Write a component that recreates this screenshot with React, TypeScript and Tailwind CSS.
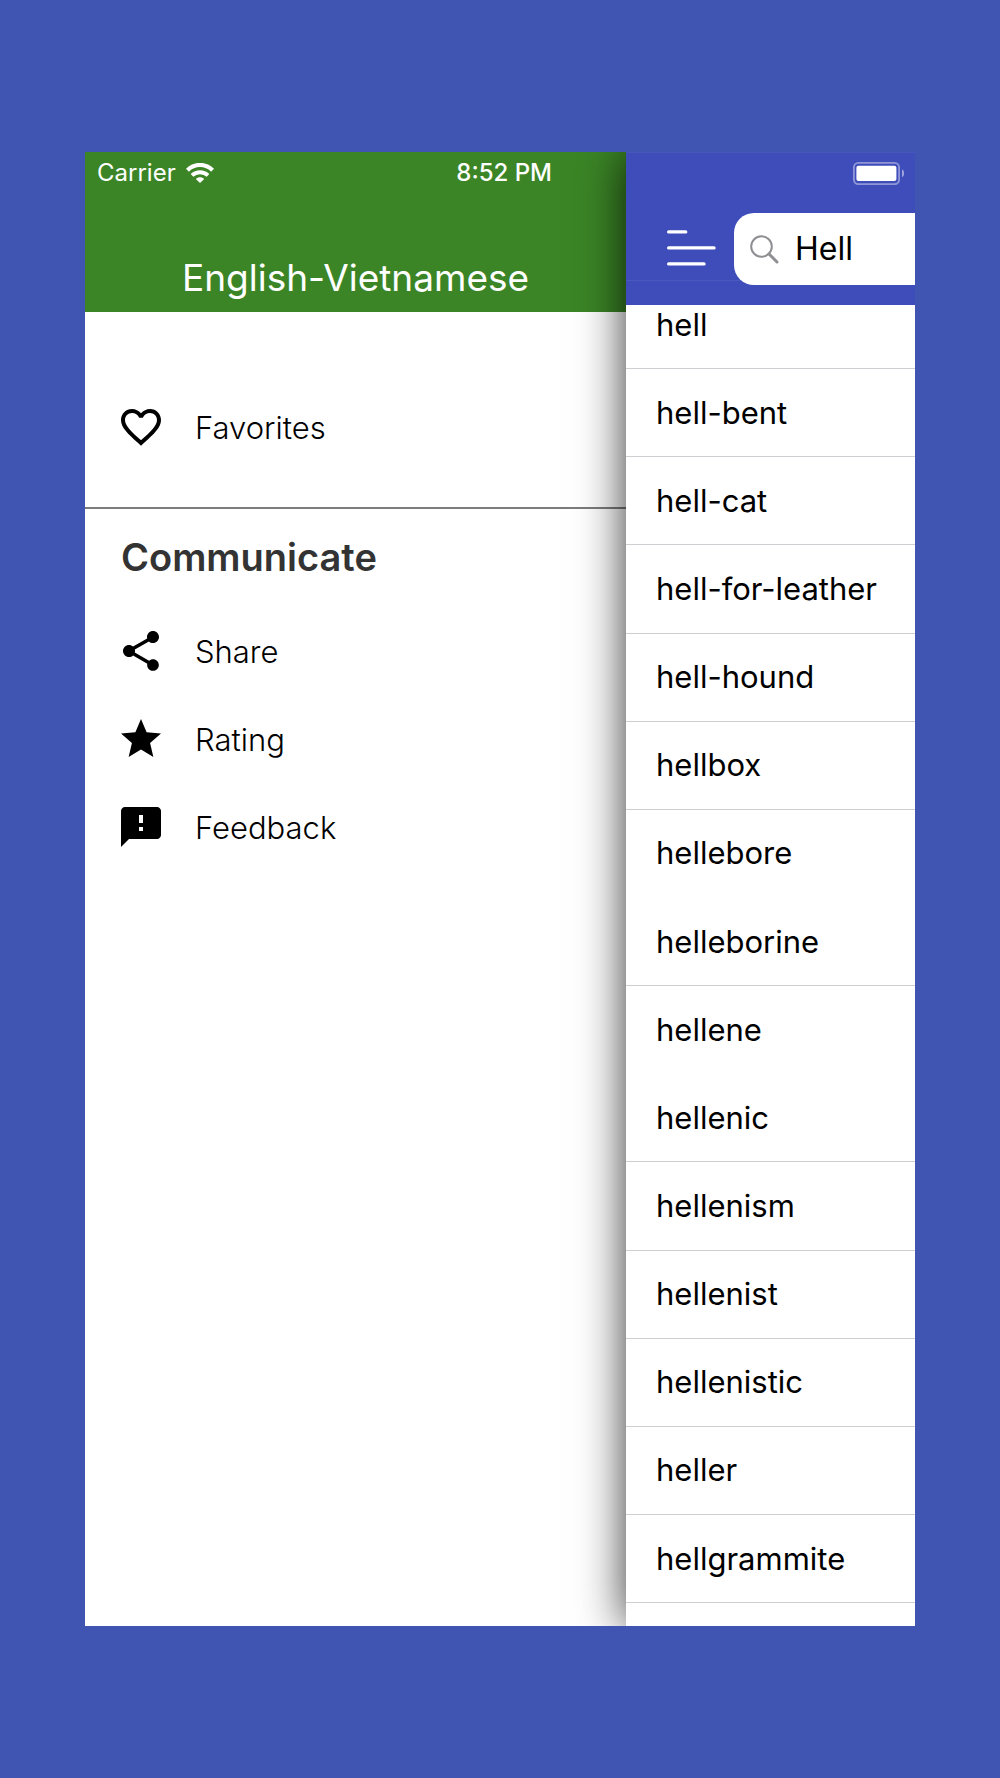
import React from 'react'
import { MdFavoriteBorder, MdFeedback, MdShare, MdStar } from 'react-icons/md'
import type { IconType } from 'react-icons'

// `joined` words have no line between them and the next one
const words = [
  { text: 'hell' },
  { text: 'hell-bent' },
  { text: 'hell-cat' },
  { text: 'hell-for-leather' },
  { text: 'hell-hound' },
  { text: 'hellbox' },
  { text: 'hellebore', joined: true },
  { text: 'helleborine' },
  { text: 'hellene', joined: true },
  { text: 'hellenic' },
  { text: 'hellenism' },
  { text: 'hellenist' },
  { text: 'hellenistic' },
  { text: 'heller' },
  { text: 'hellgrammite' },
]

const communicateItems = [
  { label: 'Share', icon: MdShare },
  { label: 'Rating', icon: MdStar },
  { label: 'Feedback', icon: MdFeedback },
]

const WifiIcon: React.FC = () => (
  <svg width="28" height="20" viewBox="0 0 28 20" fill="none" aria-hidden="true">
    <path d="M1.4 7.2C8.6 0.2 19.4 0.2 26.6 7.2" stroke="white" strokeWidth="4.2" />
    <path d="M6 12.4C10.6 8.2 17.4 8.2 22 12.4" stroke="white" strokeWidth="3.8" />
    <path d="M9.8 16C12.2 13.6 15.8 13.6 18.2 16L14 20Z" fill="white" />
  </svg>
)

const BatteryIcon: React.FC = () => (
  <svg width="52" height="23" viewBox="0 0 52 23" fill="none" aria-hidden="true">
    <rect x="0.9" y="0.9" width="45.2" height="21.2" rx="4.5" stroke="white" strokeOpacity="0.42" strokeWidth="1.8" />
    <rect x="3.4" y="3.7" width="40" height="15.4" rx="2" fill="white" />
    <path d="M49 7.3C51.8 8.6 51.8 14 49 15.3Z" fill="white" fillOpacity="0.5" />
  </svg>
)

const MenuIcon: React.FC = () => (
  <svg width="50" height="36" viewBox="0 0 50 36" stroke="white" strokeWidth="3.4" strokeLinecap="round" aria-hidden="true">
    <path d="M2.7 1.9H19.7M2.7 17.9H48M2.7 33.9H38" />
  </svg>
)

const SearchIcon: React.FC = () => (
  <svg width="29" height="29" viewBox="0 0 29 29" fill="none" stroke="#8e8e93" aria-hidden="true">
    <circle cx="11.5" cy="11.5" r="10.3" strokeWidth="2" />
    <path d="M19 19L27 27" strokeWidth="3" strokeLinecap="round" />
  </svg>
)

const DrawerItem: React.FC<{ label: string; icon: IconType }> = ({ label, icon: Icon }) => (
  <button type="button" className="flex items-center gap-[30px] w-full h-[88px] px-8 text-left">
    <Icon size={48} className="shrink-0" />
    <span className="pt-0.5 text-[31px] font-light">{label}</span>
  </button>
)

const Drawer: React.FC = () => (
  <aside className="flex-1 min-w-0 bg-white text-black">
    <header className="h-40 bg-[#3b8526] text-white">
      {/* Status bar */}
      <div className="flex items-center justify-between h-[42px] pl-3 pr-[74px] text-2xl">
        <div className="flex items-center gap-[10px]">
          <span>Carrier</span>
          <WifiIcon />
        </div>
        <span className="font-medium">8:52 PM</span>
      </div>
      <h1 className="pt-[60px] text-center text-[37px] leading-[48px] whitespace-nowrap">English-Vietnamese</h1>
    </header>

    <nav className="pt-[71px]">
      <div className="pb-9 border-b-2 border-[#7c7c7c]">
        <DrawerItem label="Favorites" icon={MdFavoriteBorder} />
      </div>
      <h2 className="flex items-center h-24 mb-0.5 px-9 text-[38px] font-semibold text-[#333333]">Communicate</h2>
      {communicateItems.map((item) => (
        <DrawerItem key={item.label} label={item.label} icon={item.icon} />
      ))}
    </nav>
  </aside>
)

const Dictionary: React.FC = () => (
  <main className="relative flex flex-col w-[289px] shrink-0 bg-white text-black shadow-[0_0_44px_rgba(0,0,0,0.8)]">
    <header className="h-[153px] bg-[#3f4dbb]">
      <div className="flex items-center justify-end h-[42px] pr-[10px] border-t border-[#4656bb]">
        <BatteryIcon />
      </div>
      {/* The search box is taller than the bar and hangs over its bottom line */}
      <div className="flex items-start justify-between h-[87px] pt-[19px] pl-10 border-b border-[#4b58c0]">
        <button type="button" aria-label="Menu" className="flex items-center h-[70px]">
          <MenuIcon />
        </button>
        <label className="flex items-center gap-4 w-[181px] h-[72px] pl-4 bg-white rounded-l-[20px]">
          <SearchIcon />
          <input
            type="text"
            aria-label="Search"
            defaultValue="Hell"
            className="w-0 flex-1 text-[32px] outline-none"
          />
        </label>
      </div>
    </header>

    {/* List is scrolled a little, so the first row is cut by the header */}
    <ul className="flex flex-col flex-1 pb-[23px] overflow-hidden">
      {words.map((word) => (
        <li
          key={word.text}
          className={`flex flex-1 items-center min-h-[88px] pl-[30px] border-b first:-mt-6 ${
            word.joined ? 'border-transparent' : 'border-[#cfcfd3]'
          }`}
        >
          <a href="#" className="text-[31px] leading-[44px] whitespace-nowrap">
            {word.text}
          </a>
        </li>
      ))}
    </ul>
  </main>
)

const App: React.FC = () => {
  return (
    <div className="flex min-h-screen px-[85px] py-[152px] bg-[#4054b2] font-['Inter',sans-serif]">
      <div className="flex flex-1 overflow-hidden">
        <Drawer />
        <Dictionary />
      </div>
    </div>
  )
}

export default App
